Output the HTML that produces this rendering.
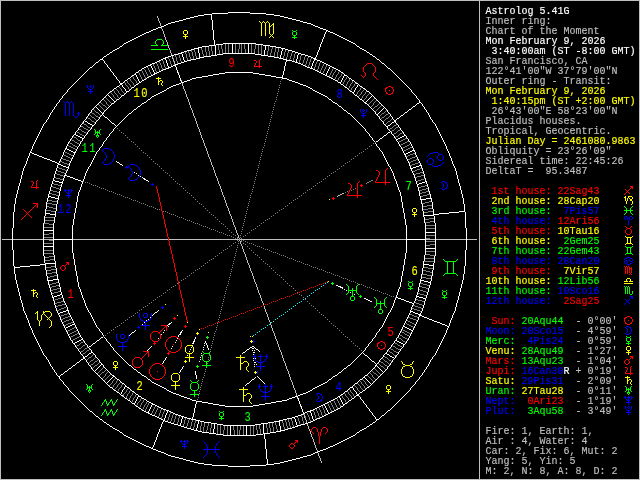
<!DOCTYPE html>
<html lang="en"><head><meta charset="utf-8"><title>Astrolog 5.41G</title>
<style>
html,body{margin:0;padding:0;background:#000;}
body{width:640px;height:480px;overflow:hidden;position:relative;}
svg{position:absolute;left:0;top:0;display:block;will-change:transform;}
.t{font-family:"Liberation Mono","DejaVu Sans Mono",monospace;font-size:10px;white-space:pre;stroke-width:.16px;}
.h{font-family:"Liberation Mono","DejaVu Sans Mono",monospace;font-size:13px;text-anchor:middle;stroke-width:.12px;}
</style></head><body>
<svg width="640" height="480" viewBox="0 0 640 480">
<rect width="640" height="480" fill="#000"/>
<g shape-rendering="crispEdges" fill="none" stroke-width="1">
<path stroke="#ffffff" transform="translate(0,.5)" d="M228 12h22M212 13h16M250 13h16M204 14h8M266 14h8M198 15h6M274 15h6M194 16h4M280 16h4M190 17h4M284 17h4M186 18h4M288 18h4M183 19h3M292 19h4M179 20h4M296 20h4M175 21h4M300 21h3M171 22h4M303 22h4M168 23h3M307 23h4M166 24h2M311 24h2M164 25h2M313 25h2M161 26h3M315 26h3M158 27h3M318 27h2M156 28h2M320 28h3M153 29h3M323 29h3M151 30h2M326 30h2M149 31h2M328 31h2M146 32h3M330 32h3M144 33h2M333 33h2M142 34h2M335 34h2M140 35h2M337 35h2M138 36h2M339 36h2M136 37h2M341 37h2M134 38h2M343 38h2M132 39h2M345 39h2M130 40h2M347 40h2M128 41h2M349 41h2M126 42h2M351 42h2M124 43h2M223 43h33M353 43h2M216 44h7M256 44h7M209 45h7M263 45h7M120 46h2M202 46h7M270 46h6M357 46h2M198 47h4M276 47h5M117 48h2M194 48h5M281 48h4M360 48h2M115 49h2M191 49h3M285 49h3M362 49h2M113 50h2M187 50h4M288 50h4M364 50h2M184 51h3M292 51h3M110 52h2M181 52h3M295 52h3M367 52h2M178 53h4M223 53h32M298 53h3M107 54h2M174 54h4M217 54h6M255 54h6M301 54h4M370 54h2M171 55h3M211 55h6M261 55h7M305 55h3M104 56h2M168 56h3M204 56h7M268 56h6M308 56h3M373 56h2M165 57h3M199 57h5M274 57h5M311 57h2M163 58h3M196 58h4M279 58h4M313 58h3M100 59h3M161 59h2M191 59h5M283 59h4M314 59h3M377 59h2M159 60h2M187 60h4M286 60h6M317 60h3M157 61h2M184 61h3M292 61h3M320 61h2M96 62h2M155 62h2M181 62h3M295 62h3M322 62h2M152 63h3M178 63h3M298 63h3M324 63h2M382 63h2M150 64h2M175 64h3M301 64h2M326 64h2M148 65h3M173 65h3M303 65h2M328 65h2M146 66h2M171 66h2M305 66h2M330 66h2M90 67h2M144 67h2M168 67h3M307 67h3M332 67h2M142 68h2M166 68h3M310 68h3M334 68h2M388 68h2M163 69h3M313 69h2M336 69h2M139 70h2M161 70h2M315 70h2M338 70h2M159 71h2M317 71h2M136 72h2M157 72h2M225 72h28M319 72h2M341 72h2M154 73h3M219 73h6M253 73h6M321 73h2M134 74h2M153 74h2M213 74h6M259 74h6M323 74h2M132 75h2M151 75h2M208 75h5M265 75h6M325 75h2M344 75h3M149 76h2M202 76h6M271 76h5M327 76h2M147 77h2M196 77h6M276 77h7M329 77h2M128 78h2M192 78h4M282 78h5M331 78h2M349 78h2M144 79h2M190 79h2M287 79h2M333 79h2M125 80h2M142 80h2M187 80h3M289 80h3M335 80h2M352 80h2M184 81h3M292 81h3M139 82h2M181 82h3M295 82h3M338 82h3M120 83h3M179 83h2M298 83h2M356 83h2M120 84h2M136 84h2M176 84h3M300 84h3M341 84h2M173 85h3M303 85h3M117 86h2M171 86h2M306 86h2M360 86h2M132 87h2M169 87h2M308 87h2M345 87h2M114 88h2M167 88h2M310 88h2M363 88h2M164 90h2M313 90h2M110 91h2M126 91h3M162 91h2M315 91h2M350 91h2M367 91h2M160 92h2M317 92h2M352 92h2M158 93h2M319 93h2M156 94h2M321 94h2M122 95h2M154 95h2M323 95h2M355 95h2M152 96h2M325 96h2M117 99h2M148 99h2M329 99h2M360 99h2M114 101h2M144 102h2M333 102h2M364 102h2M419 102h2M112 103h2M142 103h2M335 103h2M365 103h2M417 103h2M138 106h2M339 106h2M413 106h2M134 109h2M409 109h2M344 110h2M405 112h2M102 113h2M129 113h2M348 113h2M376 114h2M401 115h2M105 117h2M397 118h2M394 120h2M85 121h2M394 121h2M392 122h2M88 123h2M112 123h2M90 124h2M92 125h2M388 125h2M386 126h2M388 132h2M74 134h2M76 135h2M384 135h2M404 135h2M78 136h2M402 136h2M80 137h2M400 137h2M82 138h2M380 138h2M398 138h2M396 139h2M376 141h2M65 148h2M67 149h2M69 150h2M412 150h3M71 151h2M410 151h2M30 152h2M73 152h3M408 152h2M32 153h2M406 153h2M34 154h3M404 154h2M37 155h2M39 156h3M42 157h2M44 158h3M47 159h3M50 160h2M52 161h3M55 162h2M117 162h2M57 163h2M58 164h3M120 164h2M61 165h2M419 165h3M63 166h3M416 166h3M66 167h3M413 167h3M410 168h3M64 175h3M67 176h3M70 177h3M73 178h2M143 178h2M75 179h3M144 179h2M53 180h2M78 180h3M146 180h2M55 181h4M81 181h2M425 181h2M59 182h4M422 182h3M419 183h3M417 184h2M48 196h3M51 197h4M55 198h4M426 198h6M420 199h6M459 211h6M449 212h10M45 213h5M439 213h10M50 214h6M433 214h6M423 215h11M43 230h11M425 232h11M53 239h20M406 239h20M43 246h11M425 248h11M45 263h11M40 264h6M423 264h6M30 265h10M429 265h5M20 266h10M14 267h6M53 279h6M47 280h6M420 280h4M424 281h4M428 282h3M336 285h2M338 286h3M340 287h3M60 294h2M57 295h3M54 296h3M416 296h3M52 297h2M396 297h2M419 297h4M364 298h2M398 298h3M423 298h3M366 299h2M401 299h3M368 300h2M404 300h2M370 301h2M406 301h3M409 302h3M412 303h2M66 310h3M63 311h3M410 311h3M60 312h3M155 312h2M413 312h2M58 313h2M415 313h3M418 314h3M419 315h3M422 316h2M424 317h3M427 318h2M429 319h3M432 320h2M434 321h3M437 322h3M169 323h2M440 323h2M72 324h3M168 324h2M442 324h3M70 325h2M445 325h2M68 326h2M403 326h2M447 326h2M66 327h2M405 327h2M407 328h2M409 329h2M411 330h2M132 332h2M180 332h2M179 334h2M101 337h2M81 339h2M79 340h2M97 340h2M395 340h2M77 341h2M193 341h2M397 341h2M75 342h2M399 342h2M73 343h2M93 343h2M192 343h2M401 343h2M403 344h2M89 346h2M252 346h2M250 347h2M252 348h2M247 349h2M256 349h2M91 352h2M243 352h2M253 352h2M89 353h2M385 353h2M387 354h2M365 355h2M85 356h2M390 356h2M83 357h2M392 357h2M83 358h2M81 359h2M372 361h2M77 362h2M254 362h2M101 364h2M73 365h2M129 365h2M348 365h2M375 365h2M69 368h2M344 368h2M134 369h2M65 371h2M138 372h2M339 372h2M61 374h2M112 375h2M142 375h2M335 375h2M365 375h2M58 376h2M113 376h2M144 376h2M333 376h2M363 377h2M117 379h2M148 379h2M252 379h2M329 379h2M360 379h2M152 382h2M325 382h2M122 383h2M154 383h2M247 383h2M323 383h2M355 383h2M156 384h2M321 384h2M158 385h2M319 385h2M125 386h2M160 386h2M317 386h2M110 387h2M127 387h2M162 387h2M315 387h2M350 387h3M367 387h2M164 388h2M313 388h2M114 390h2M167 390h2M310 390h2M363 390h2M132 391h2M169 391h2M308 391h2M345 391h2M117 392h2M171 392h2M306 392h2M360 392h2M173 393h3M303 393h3M136 394h2M176 394h3M300 394h3M341 394h2M357 394h2M121 395h2M179 395h2M298 395h2M356 395h3M138 396h3M181 396h3M295 396h3M338 396h2M184 397h3M292 397h3M125 398h2M142 398h2M187 398h3M289 398h3M335 398h2M352 398h2M144 399h2M190 399h2M287 399h2M333 399h2M128 400h2M192 400h4M282 400h5M331 400h2M349 400h2M147 401h2M196 401h6M276 401h6M329 401h2M149 402h2M202 402h6M271 402h5M327 402h2M132 403h3M151 403h2M208 403h5M265 403h6M325 403h2M345 403h2M152 404h3M213 404h6M259 404h6M323 404h2M343 404h2M155 405h2M219 405h6M253 405h6M321 405h2M136 406h2M157 406h2M225 406h28M319 406h2M341 406h2M159 407h2M317 407h2M139 408h2M161 408h2M315 408h2M338 408h2M163 409h3M313 409h2M336 409h2M142 410h2M166 410h3M310 410h3M334 410h2M388 410h2M90 411h2M144 411h2M169 411h2M307 411h4M332 411h2M146 412h3M171 412h2M305 412h2M330 412h2M148 413h2M173 413h2M303 413h2M328 413h2M150 414h2M175 414h3M301 414h2M326 414h2M152 415h3M178 415h3M298 415h3M324 415h2M382 415h2M96 416h2M155 416h2M181 416h3M295 416h3M322 416h2M157 417h2M184 417h3M292 417h3M320 417h2M159 418h2M187 418h4M287 418h5M317 418h3M100 419h2M161 419h2M191 419h5M283 419h4M315 419h2M376 419h3M163 420h2M196 420h4M279 420h4M313 420h2M165 421h3M200 421h4M274 421h6M311 421h2M104 422h2M168 422h3M204 422h7M268 422h6M308 422h3M373 422h2M171 423h3M211 423h6M261 423h7M305 423h3M107 424h2M174 424h4M217 424h6M255 424h6M301 424h4M370 424h2M178 425h3M223 425h32M297 425h4M110 426h2M181 426h3M295 426h3M367 426h2M184 427h3M292 427h3M113 428h2M187 428h4M288 428h4M364 428h2M115 429h2M191 429h3M285 429h3M362 429h2M117 430h2M194 430h4M280 430h5M360 430h2M198 431h4M276 431h5M120 432h2M202 432h7M270 432h6M357 432h2M209 433h7M263 433h7M216 434h7M256 434h7M124 435h2M223 435h33M353 435h2M126 436h2M351 436h2M128 437h2M349 437h2M130 438h2M347 438h2M132 439h2M345 439h2M134 440h2M343 440h2M136 441h2M341 441h2M138 442h2M339 442h2M140 443h2M337 443h2M142 444h2M335 444h2M144 445h2M333 445h2M146 446h3M330 446h3M149 447h2M328 447h2M151 448h2M326 448h2M153 449h3M323 449h3M156 450h2M320 450h3M158 451h3M318 451h2M161 452h3M315 452h3M164 453h2M313 453h2M166 454h2M311 454h2M168 455h3M307 455h4M171 456h4M303 456h4M175 457h4M300 457h3M179 458h4M296 458h4M183 459h3M292 459h4M186 460h4M288 460h4M190 461h4M284 461h4M194 462h4M280 462h4M198 463h6M274 463h6M204 464h8M266 464h8M212 465h16M250 465h16M228 466h22"/>
<path stroke="#ffffff" transform="translate(.5,0)" d="M12 228v22M13 212v16M13 250v16M14 204v8M14 266v1M14 268v6M15 198v6M15 274v6M16 194v4M16 280v4M17 190v4M17 284v4M18 186v4M18 288v4M19 183v3M19 292v4M20 179v4M20 296v4M21 175v4M21 300v3M22 171v4M22 303v4M23 168v3M23 307v4M24 166v2M24 311v2M25 164v2M25 313v2M26 161v3M26 315v3M27 158v3M27 318v2M28 156v2M28 320v3M29 153v3M29 323v3M30 151v1M30 326v2M31 149v2M31 328v2M32 146v3M32 330v3M33 144v2M33 333v2M34 142v2M34 335v2M35 140v2M35 337v2M36 138v2M36 339v2M37 136v2M37 341v2M38 134v2M38 343v2M39 132v2M39 345v2M40 130v2M40 347v2M41 128v2M41 349v2M42 126v2M42 351v2M43 124v2M43 223v7M43 231v15M43 247v9M43 353v2M44 123v1M44 216v7M44 256v7M44 355v1M45 122v1M45 209v4M45 214v2M45 265v5M45 356v1M46 120v2M46 202v7M46 270v6M46 357v2M47 119v1M47 198v4M47 276v4M47 359v1M48 117v2M48 194v2M48 197v1M48 281v4M48 360v2M49 115v2M49 191v3M49 285v3M49 362v2M50 113v2M50 187v4M50 288v4M50 364v2M51 112v1M51 184v3M51 292v3M51 366v1M52 110v2M52 181v3M52 295v2M52 367v2M53 109v1M53 178v2M53 223v7M53 231v8M53 240v6M53 247v8M53 298v3M53 369v1M54 107v2M54 174v4M54 217v6M54 255v6M54 301v4M54 370v2M55 106v1M55 171v3M55 211v3M55 215v2M55 261v2M55 264v4M55 305v3M55 372v1M56 104v2M56 168v3M56 204v7M56 268v6M56 308v3M56 373v2M57 103v1M57 165v3M57 200v4M57 274v5M57 311v2M57 375v1M58 102v1M58 196v2M58 199v1M58 280v3M58 314v1M59 100v2M59 161v2M59 191v5M59 283v4M59 315v2M59 377v2M60 99v1M60 159v2M60 187v4M60 287v5M60 317v3M60 375v1M60 379v1M61 98v1M61 157v2M61 184v3M61 292v2M61 320v2M61 380v1M62 96v2M62 155v2M62 181v1M62 183v1M62 295v3M62 322v2M62 381v1M63 95v1M63 152v3M63 178v3M63 298v3M63 324v2M63 373v1M63 382v2M64 94v1M64 150v2M64 176v2M64 301v2M64 326v2M64 372v1M64 384v1M65 93v1M65 149v1M65 173v2M65 303v2M65 328v2M65 385v1M66 92v1M66 146v2M66 171v2M66 305v2M66 330v2M66 386v1M67 90v2M67 144v2M67 169v2M67 307v3M67 332v2M67 370v1M67 387v1M68 89v1M68 142v2M68 166v1M68 168v1M68 311v2M68 334v2M68 369v1M68 388v2M69 88v1M69 141v1M69 163v3M69 313v2M69 336v2M69 390v1M70 87v1M70 139v2M70 161v2M70 315v2M70 338v2M70 391v1M71 86v1M71 138v1M71 159v2M71 317v2M71 340v1M71 367v1M71 392v1M72 85v1M72 136v2M72 157v2M72 225v14M72 240v13M72 319v2M72 341v2M72 366v1M72 393v1M73 84v1M73 135v1M73 155v2M73 219v6M73 253v6M73 321v2M73 394v1M74 83v1M74 153v2M74 213v6M74 259v6M74 323v1M74 344v1M74 395v1M75 82v1M75 132v2M75 151v1M75 208v5M75 265v6M75 325v2M75 345v2M75 364v1M75 396v1M76 81v1M76 131v1M76 149v2M76 202v6M76 271v5M76 327v2M76 347v1M76 363v1M76 397v1M77 80v1M77 130v1M77 147v2M77 196v6M77 276v6M77 329v2M77 348v1M77 398v1M78 79v1M78 128v2M78 146v1M78 192v4M78 282v5M78 331v2M78 349v2M78 399v1M79 78v1M79 127v1M79 144v2M79 190v2M79 287v2M79 333v2M79 351v1M79 361v1M79 400v1M80 77v1M80 125v2M80 142v2M80 187v3M80 289v3M80 335v2M80 352v2M80 360v1M80 401v1M81 76v1M81 124v1M81 141v1M81 184v3M81 292v3M81 337v1M81 354v1M81 402v1M82 75v1M82 123v1M82 139v2M82 182v2M82 295v3M82 338v1M82 355v1M82 403v1M83 74v1M83 121v2M83 179v2M83 298v2M83 340v1M83 356v1M83 404v1M84 73v1M84 120v1M84 136v2M84 176v3M84 300v3M84 341v2M84 405v1M85 72v1M85 119v1M85 135v1M85 173v3M85 303v3M85 343v1M85 359v1M85 406v1M86 71v1M86 117v2M86 134v1M86 171v2M86 306v2M86 344v1M86 360v2M86 407v1M87 70v1M87 116v1M87 122v1M87 132v2M87 169v2M87 308v2M87 345v2M87 355v1M87 362v1M87 408v1M88 69v1M88 114v2M88 131v1M88 167v2M88 310v2M88 347v1M88 354v1M88 363v2M88 409v1M89 68v1M89 113v1M89 130v1M89 166v1M89 312v1M89 348v1M89 365v1M89 410v1M90 112v1M90 129v1M90 164v2M90 313v2M90 349v1M90 366v1M91 110v2M91 127v2M91 162v2M91 315v2M91 345v1M91 350v2M91 367v2M92 66v1M92 109v1M92 126v1M92 160v2M92 317v2M92 344v1M92 369v1M92 412v1M93 65v1M93 108v1M93 158v2M93 319v2M93 353v1M93 370v1M93 413v1M94 64v1M94 107v1M94 124v1M94 156v2M94 321v2M94 354v1M94 371v1M94 414v1M95 63v1M95 106v1M95 122v2M95 154v2M95 323v2M95 342v1M95 355v2M95 370v1M95 372v1M95 415v1M96 105v1M96 107v1M96 121v1M96 152v2M96 325v2M96 341v1M96 357v1M96 369v1M96 373v1M97 104v1M97 108v1M97 120v1M97 151v1M97 327v1M97 358v1M97 368v1M97 374v1M98 61v1M98 103v1M98 109v1M98 119v1M98 150v1M98 328v1M98 359v1M98 367v1M98 375v1M98 417v1M99 60v1M99 102v1M99 110v1M99 117v2M99 148v2M99 329v2M99 339v1M99 360v2M99 366v1M99 376v1M99 418v1M100 101v1M100 111v1M100 116v1M100 147v1M100 331v1M100 338v1M100 362v1M100 365v1M100 377v1M101 100v1M101 112v1M101 115v1M101 146v1M101 332v1M101 363v1M101 378v1M102 58v1M102 99v1M102 114v1M102 144v2M102 333v2M102 379v1M102 420v1M103 57v1M103 60v1M103 98v1M103 112v1M103 115v1M103 142v2M103 335v1M103 365v2M103 380v1M103 421v1M104 61v2M104 97v1M104 111v1M104 116v1M104 141v1M104 337v1M104 367v1M104 381v1M105 63v1M105 96v1M105 110v1M105 140v1M105 338v1M105 368v1M105 382v1M106 55v1M106 64v1M106 95v1M106 109v1M106 138v2M106 339v2M106 369v1M106 383v1M106 423v1M107 65v2M107 94v1M107 108v1M107 118v1M107 137v1M107 341v1M107 370v1M107 382v1M107 384v1M108 67v1M108 93v1M108 95v1M108 107v1M108 119v1M108 136v1M108 342v1M108 371v1M108 381v1M108 385v1M109 53v1M109 68v1M109 92v1M109 96v1M109 106v1M109 120v1M109 134v2M109 343v1M109 372v1M109 380v1M109 386v1M109 425v1M110 69v2M110 97v1M110 105v1M110 121v1M110 133v1M110 344v2M110 373v1M110 379v1M111 71v1M111 98v1M111 104v1M111 122v1M111 132v1M111 346v1M111 374v1M111 378v1M112 51v1M112 72v1M112 90v1M112 99v1M112 131v1M112 347v1M112 377v1M112 388v1M112 427v1M113 73v2M113 89v1M113 100v1M113 129v2M113 348v2M113 389v1M114 75v1M114 102v1M114 124v1M114 128v1M114 350v1M115 76v1M115 125v1M115 127v1M115 351v1M115 377v1M116 77v2M116 87v1M116 100v1M116 126v1M116 161v1M116 352v1M116 378v1M116 391v1M117 79v1M117 125v1M117 353v1M118 80v1M118 124v1M118 354v1M119 47v1M119 81v2M119 85v1M119 98v1M119 123v1M119 163v1M119 355v1M119 380v1M119 393v1M119 431v1M120 97v1M120 122v1M120 356v1M120 381v1M120 394v1M121 96v1M121 121v1M121 357v1M121 382v1M121 392v2M122 45v1M122 85v2M122 120v1M122 165v1M122 358v1M122 390v2M122 433v1M123 44v1M123 82v1M123 87v1M123 119v1M123 359v1M123 389v1M123 396v1M123 434v1M124 81v1M124 88v1M124 94v1M124 118v1M124 360v1M124 384v1M124 387v2M124 397v1M125 89v2M125 93v1M125 117v1M125 361v1M125 385v1M126 92v1M126 116v1M126 362v1M127 79v1M127 115v1M127 363v1M127 399v1M128 114v1M128 364v1M129 90v1M129 335v1M129 388v1M130 77v1M130 89v1M130 334v1M130 389v1M130 401v1M131 76v1M131 88v1M131 112v1M131 333v1M131 366v1M131 390v1M131 402v1M132 111v1M132 367v1M133 110v1M133 368v1M134 86v1M134 172v1M134 331v1M134 392v1M134 404v1M135 73v1M135 85v1M135 330v1M135 393v1M135 401v2M135 405v1M136 75v2M136 108v1M136 173v1M136 370v1M136 399v2M137 77v2M137 107v1M137 371v1M137 397v2M138 71v1M138 79v2M138 83v1M138 175v1M138 395v1M138 407v1M139 81v1M140 105v1M140 176v1M140 373v1M141 69v1M141 81v1M141 104v1M141 374v1M141 397v1M141 409v1M142 177v1M142 324v1M144 322v1M146 78v1M146 101v1M146 320v1M146 377v1M146 400v1M147 100v1M147 350v1M147 378v1M148 181v1M148 319v1M148 349v1M148 411v1M149 348v1M149 409v2M150 98v1M150 317v1M150 347v1M150 380v1M150 407v2M151 66v2M151 97v1M151 346v1M151 381v1M151 405v2M152 68v2M152 315v1M152 447v1M153 70v2M153 314v1M153 445v2M154 72v1M154 313v1M154 442v3M155 440v2M156 437v3M157 311v1M157 434v3M158 310v1M158 338v1M158 432v2M159 429v3M160 427v2M161 334v1M161 424v3M162 363v1M162 422v2M163 332v1M163 361v2M163 421v1M164 330v1M164 360v1M164 418v2M165 59v1M165 358v2M165 415v3M166 60v3M166 89v1M166 357v1M166 389v1M166 413v2M167 63v3M167 325v1M167 411v2M168 66v1M168 326v1M171 322v1M171 348v1M172 346v1M175 66v1M175 342v1M176 67v3M176 340v1M177 70v3M177 338v1M178 73v2M178 335v2M179 75v3M179 372v1M180 78v3M180 333v1M180 370v2M180 423v2M181 81v1M181 331v1M181 369v1M181 419v4M182 54v3M182 330v1M182 367v2M182 417v2M183 57v3M183 366v1M184 60v1M187 355v1M189 351v1M190 349v1M191 347v1M192 345v1M192 417v2M193 342v1M193 413v4M194 339v2M194 408v5M195 337v2M195 371v4M195 404v4M196 375v4M196 402v2M196 428v2M197 424v4M198 49v4M198 421v3M199 53v4M199 361v1M200 357v1M200 359v1M201 353v1M201 355v1M203 347v1M203 349v1M204 343v1M204 345v1M205 341v2M206 343v2M207 345v3M208 348v2M211 15v5M212 20v10M213 30v10M213 429v4M214 40v5M214 424v5M215 46v9M230 426v9M232 44v9M242 353v1M245 351v1M245 385v1M246 350v1M246 384v1M246 426v9M248 44v9M249 348v1M249 382v1M250 381v1M251 380v1M252 350v1M253 354v1M253 358v1M253 360v1M254 347v1M254 350v1M254 364v1M254 366v1M254 378v1M255 348v1M255 358v1M255 377v1M256 364v1M257 376v1M258 350v1M258 377v1M259 351v1M259 378v1M260 379v1M261 380v1M262 381v1M263 382v1M263 424v9M264 50v5M264 383v1M264 434v5M265 46v4M265 439v10M266 449v10M267 459v5M279 422v4M280 55v3M280 426v4M281 51v4M282 49v2M282 75v2M283 71v4M284 66v5M285 62v4M286 61v1M294 418v1M295 419v3M296 59v3M296 422v3M297 55v4M297 397v1M298 54v1M298 398v3M299 401v3M300 404v2M301 406v3M302 409v3M303 412v1M310 412v1M311 66v2M311 413v3M312 63v3M312 89v1M312 389v1M312 416v3M313 61v2M313 419v1M314 60v1M315 57v1M316 55v2M317 52v3M318 50v2M319 47v3M320 44v3M321 42v2M322 39v3M323 37v2M324 34v3M324 405v1M325 32v2M325 406v2M326 31v1M326 73v2M326 408v2M327 71v2M327 97v1M327 381v1M327 410v2M328 69v2M328 98v1M328 380v1M328 412v1M329 67v2M331 100v1M331 378v1M332 101v1M332 377v1M337 81v1M337 104v1M337 374v1M337 397v1M338 105v1M338 373v1M339 397v1M340 71v1M340 83v1M340 395v1M340 398v2M340 407v1M341 80v2M341 107v1M341 371v1M341 400v2M342 78v2M342 108v1M342 288v1M342 370v1M342 402v2M343 73v1M343 76v2M343 85v1M343 109v1M343 369v1M343 393v1M343 405v1M344 74v1M344 86v1M344 289v1M344 392v1M346 111v1M346 290v1M346 367v1M347 76v1M347 88v1M347 112v1M347 366v1M347 390v1M347 402v1M348 77v1M348 89v1M348 389v1M348 401v1M349 90v1M349 388v1M350 114v1M350 292v1M350 364v1M351 79v1M351 115v1M351 363v1M351 399v1M352 116v1M352 362v1M352 386v1M353 93v1M353 117v1M353 361v1M353 385v1M353 388v2M354 81v1M354 90v2M354 94v1M354 118v1M354 294v1M354 360v1M354 384v1M354 390v1M354 397v1M355 44v1M355 82v1M355 88v2M355 119v1M355 359v1M355 391v1M355 396v1M355 434v1M356 45v1M356 87v1M356 120v1M356 358v1M356 392v2M356 433v1M357 85v2M357 96v1M357 121v1M357 357v1M357 382v1M358 84v1M358 97v1M358 122v1M358 356v1M358 381v1M359 47v1M359 85v1M359 98v1M359 123v1M359 355v1M359 380v1M359 393v1M359 396v1M359 431v1M360 124v1M360 354v1M360 397v2M361 125v1M361 353v1M361 399v1M362 87v1M362 100v1M362 126v1M362 352v1M362 378v1M362 391v1M362 400v1M363 101v1M363 127v1M363 351v1M363 353v1M363 401v2M364 128v1M364 350v1M364 354v1M364 376v1M364 403v1M365 89v1M365 129v2M365 348v2M365 378v1M365 389v1M365 404v1M366 51v1M366 90v1M366 101v1M366 131v1M366 347v1M366 379v1M366 388v1M366 405v2M366 427v1M367 100v1M367 104v1M367 132v1M367 346v1M367 356v1M367 374v1M367 380v1M367 407v1M368 99v1M368 105v1M368 133v1M368 344v2M368 357v1M368 373v1M368 381v1M368 408v1M369 53v1M369 92v1M369 98v1M369 106v1M369 134v2M369 343v1M369 358v1M369 372v1M369 382v1M369 386v1M369 409v2M369 425v1M370 93v1M370 97v1M370 107v1M370 136v1M370 342v1M370 359v1M370 371v1M370 383v1M370 385v1M370 411v1M371 94v1M371 96v1M371 108v1M371 137v1M371 341v1M371 360v1M371 370v1M371 384v1M371 412v1M372 55v1M372 95v1M372 109v1M372 138v2M372 339v2M372 369v1M372 383v1M372 413v2M372 423v1M373 96v1M373 110v1M373 140v1M373 338v1M373 368v1M373 382v1M373 415v1M374 97v1M374 111v1M374 141v1M374 337v1M374 362v1M374 367v1M374 381v1M374 416v1M375 57v1M375 98v1M375 112v2M375 143v1M375 335v2M375 363v1M375 366v1M375 380v1M375 417v2M375 421v1M376 58v1M376 99v1M376 144v2M376 333v2M376 364v1M376 379v1M376 420v1M377 100v1M377 115v1M377 146v1M377 332v1M377 363v1M377 366v1M377 378v1M378 101v1M378 113v1M378 116v1M378 140v1M378 147v1M378 331v1M378 362v1M378 367v1M378 377v1M379 60v1M379 102v1M379 112v1M379 117v2M379 139v1M379 148v2M379 329v2M379 360v2M379 368v1M379 376v1M379 418v1M380 61v1M380 103v1M380 111v1M380 119v1M380 150v1M380 328v1M380 359v1M380 369v1M380 375v1M380 417v1M381 62v1M381 104v1M381 110v1M381 120v1M381 151v1M381 327v1M381 358v1M381 370v1M381 374v1M381 416v1M382 105v1M382 109v1M382 121v1M382 137v1M382 152v2M382 325v2M382 357v1M382 371v1M382 373v1M383 106v1M383 108v1M383 122v2M383 136v1M383 154v2M383 323v2M383 355v2M383 372v1M384 64v1M384 107v1M384 124v1M384 156v2M384 321v2M384 354v1M384 371v1M384 414v1M385 65v1M385 108v1M385 125v1M385 158v2M385 319v2M385 370v1M385 413v1M386 66v1M386 109v1M386 134v1M386 160v2M386 317v2M386 352v1M386 369v1M386 412v1M387 67v1M387 110v2M387 127v2M387 133v1M387 162v2M387 315v2M387 350v2M387 367v2M387 411v1M388 112v1M388 129v1M388 164v2M388 313v2M388 349v1M388 366v1M389 113v1M389 130v1M389 166v1M389 312v1M389 348v1M389 355v1M389 365v1M390 69v1M390 114v2M390 124v1M390 131v1M390 167v2M390 310v2M390 347v1M390 363v2M390 409v1M391 70v1M391 116v1M391 123v1M391 132v2M391 169v2M391 308v2M391 345v2M391 362v1M391 408v1M392 71v1M392 117v2M392 134v1M392 171v2M392 306v2M392 344v1M392 360v2M392 407v1M393 72v1M393 119v1M393 135v1M393 173v3M393 303v3M393 343v1M393 359v1M393 406v1M394 73v1M394 136v2M394 176v3M394 300v3M394 341v2M394 358v1M394 405v1M395 74v1M395 122v1M395 138v1M395 179v2M395 298v2M395 356v2M395 404v1M396 75v1M396 119v1M396 123v1M396 140v1M396 181v3M396 295v2M396 338v2M396 355v1M396 403v1M397 76v1M397 124v1M397 141v1M397 184v3M397 292v3M397 337v1M397 354v1M397 402v1M398 77v1M398 125v2M398 142v2M398 187v3M398 289v3M398 335v2M398 352v2M398 401v1M399 78v1M399 117v1M399 127v1M399 144v2M399 190v2M399 287v2M399 333v2M399 351v1M399 400v1M400 79v1M400 116v1M400 128v2M400 146v1M400 192v4M400 282v5M400 331v2M400 349v2M400 399v1M401 80v1M401 130v1M401 147v2M401 196v6M401 276v6M401 329v2M401 348v1M401 398v1M402 81v1M402 131v1M402 149v2M402 202v6M402 271v5M402 327v2M402 347v1M402 397v1M403 82v1M403 114v1M403 132v2M403 151v2M403 208v5M403 265v6M403 325v1M403 345v2M403 396v1M404 83v1M404 113v1M404 134v1M404 153v1M404 213v6M404 259v6M404 323v2M404 395v1M405 84v1M405 155v2M405 219v6M405 253v6M405 321v2M405 343v1M405 394v1M406 85v1M406 136v2M406 157v2M406 225v14M406 240v13M406 319v2M406 341v2M406 393v1M407 86v1M407 111v1M407 138v1M407 159v2M407 317v2M407 340v1M407 392v1M408 87v1M408 110v1M408 139v2M408 161v2M408 315v2M408 338v2M408 391v1M409 88v1M409 141v1M409 163v3M409 313v2M409 336v2M409 390v1M410 89v1M410 142v2M410 166v2M410 310v1M410 312v1M410 334v2M410 388v2M411 90v2M411 108v1M411 144v2M411 169v2M411 307v3M411 332v2M411 387v1M412 92v1M412 107v1M412 146v2M412 171v2M412 305v2M412 331v1M412 386v1M413 93v1M413 148v2M413 173v2M413 304v1M413 328v2M413 385v1M414 94v1M414 151v1M414 175v3M414 301v2M414 326v2M414 384v1M415 95v1M415 105v1M415 152v3M415 178v3M415 298v3M415 324v2M415 382v2M416 96v2M416 104v1M416 155v2M416 181v3M416 295v1M416 297v1M416 322v2M416 381v1M417 98v1M417 157v2M417 185v2M417 292v3M417 320v2M417 380v1M418 99v1M418 159v2M418 187v4M418 287v5M418 317v3M418 379v1M419 100v2M419 161v2M419 191v5M419 283v4M419 316v1M419 377v2M420 163v2M420 196v3M420 279v1M420 281v2M420 313v1M420 376v1M421 103v1M421 166v2M421 200v4M421 274v5M421 311v2M421 375v1M422 104v2M422 168v3M422 204v7M422 268v6M422 308v3M422 373v2M423 106v1M423 171v3M423 211v4M423 216v1M423 261v3M423 265v3M423 305v3M423 372v1M424 107v2M424 174v4M424 217v6M424 255v6M424 301v4M424 370v2M425 109v1M425 178v3M425 223v9M425 233v6M425 240v8M425 249v6M425 299v2M425 369v1M426 110v2M426 182v2M426 295v3M426 367v2M427 112v1M427 184v3M427 292v3M427 366v1M428 113v2M428 187v4M428 288v4M428 364v2M429 115v2M429 191v3M429 285v3M429 362v2M430 117v2M430 194v4M430 281v1M430 283v2M430 360v2M431 119v1M431 199v3M431 276v5M431 359v1M432 120v2M432 202v7M432 270v6M432 357v2M433 122v1M433 209v5M433 263v2M433 266v4M433 356v1M434 123v1M434 216v7M434 256v7M434 355v1M435 124v2M435 223v9M435 233v15M435 249v7M435 353v2M436 126v2M436 351v2M437 128v2M437 349v2M438 130v2M438 347v2M439 132v2M439 345v2M440 134v2M440 343v2M441 136v2M441 341v2M442 138v2M442 339v2M443 140v2M443 337v2M444 142v2M444 335v2M445 144v2M445 333v2M446 146v3M446 330v3M447 149v2M447 328v2M448 151v2M448 327v1M449 153v3M449 323v3M450 156v2M450 320v3M451 158v3M451 318v2M452 161v3M452 315v3M453 164v2M453 313v2M454 166v2M454 311v2M455 168v3M455 307v4M456 171v4M456 303v4M457 175v4M457 300v3M458 179v4M458 296v4M459 183v3M459 292v4M460 186v4M460 288v4M461 190v4M461 284v4M462 194v4M462 280v4M463 198v6M463 274v6M464 204v7M464 266v8M465 212v16M465 250v16M466 228v22"/>
<path stroke="#bfbfbf" transform="translate(0,.5)" d="M0 0h640M342 193h2M340 194h2M338 195h2M2 239h10M13 239h30M44 239h9M73 239h95M169 239h70M240 239h166M426 239h9M436 239h30M467 239h10M0 479h640"/>
<path stroke="#bfbfbf" transform="translate(.5,0)" d="M0 1v478M157 16v2M158 18v3M159 21v2M160 23v3M161 27v2M162 29v2M163 31v3M164 34v3M165 37v3M166 40v2M167 42v3M168 45v3M169 48v2M170 50v3M171 53v2M172 56v3M173 59v2M174 61v3M178 72v1M181 80v1M182 83v3M183 86v3M184 89v2M185 91v3M186 94v3M187 97v2M188 99v3M189 102v3M190 105v3M191 108v2M192 110v3M193 113v3M194 116v2M195 118v3M196 121v3M197 124v3M198 127v2M199 129v3M200 132v3M201 135v3M202 138v2M203 140v3M204 143v3M205 146v2M206 148v3M207 151v3M208 154v3M209 157v2M210 159v3M211 162v3M212 165v2M213 167v3M214 170v3M215 173v3M216 176v2M217 178v3M218 181v3M219 184v2M220 186v3M221 189v3M222 192v3M223 195v2M224 197v3M225 200v3M226 203v3M227 206v2M228 208v3M229 211v3M230 214v2M231 216v3M232 219v3M233 222v3M234 225v2M235 227v3M236 230v3M237 233v2M238 235v3M239 238v1M239 240v1M240 241v3M241 244v2M242 246v3M243 249v3M244 252v2M245 254v3M246 257v3M247 260v3M248 263v2M249 265v3M250 268v3M251 271v2M252 273v3M253 276v3M254 279v3M255 282v2M256 284v3M257 287v3M258 290v3M259 293v2M260 295v3M261 298v3M262 301v2M263 303v2M264 306v3M265 309v3M266 312v2M267 314v3M268 317v3M269 320v2M270 322v3M271 325v3M272 328v3M273 331v2M274 333v3M275 336v3M276 339v2M277 341v3M278 344v3M279 347v3M280 350v2M281 352v3M282 355v3M283 358v3M284 361v2M285 363v3M286 366v3M287 369v2M288 371v3M289 374v3M290 377v3M291 380v2M292 382v3M293 385v3M294 388v2M295 390v3M296 393v3M297 398v1M300 406v1M303 414v1M304 415v3M305 418v2M306 420v3M307 424v2M308 426v3M309 429v2M310 431v3M311 434v3M312 437v2M313 439v3M314 442v3M315 445v3M316 448v2M317 450v2M318 453v3M319 456v2M320 458v3M321 461v2M337 196v1M479 1v478M639 1v478"/>
<path stroke="#7f7f7f" transform="translate(0,.5)" d="M103 105h2M375 106h2M96 112h2M92 113h2M382 113h2M386 114h2M96 116h2M92 117h2M382 117h2M88 118h2M386 118h2M92 121h2M388 121h2M84 124h2M394 125h2M81 126h2M88 127h2M396 127h2M84 128h2M390 128h2M79 129h2M86 129h2M392 130h2M398 130h2M82 131h2M77 132h2M84 132h2M394 133h2M400 133h2M80 134h2M82 135h2M396 136h2M74 137h2M405 138h2M403 139h2M72 140h2M78 140h2M401 140h2M399 141h2M407 141h2M75 142h2M405 142h2M70 143h2M77 143h2M403 143h2M401 144h2M73 145h2M407 145h2M69 146h2M75 146h2M405 146h2M71 147h2M403 147h2M410 147h2M73 148h2M408 148h2M406 149h2M404 150h2M65 152h2M67 153h2M413 153h2M69 154h2M410 154h3M64 155h2M71 155h2M408 155h2M66 156h2M406 156h2M68 157h2M412 157h3M70 158h2M410 158h2M63 159h3M408 159h2M416 159h2M66 160h3M413 160h3M60 161h2M411 161h2M62 162h2M409 162h2M64 163h3M415 163h3M67 164h2M412 164h3M410 165h2M59 168h3M420 168h2M62 169h3M417 169h3M65 170h2M415 170h2M58 171h3M413 171h2M61 172h3M420 172h3M416 173h4M57 174h3M414 174h2M60 175h3M421 175h3M417 176h4M415 177h2M56 178h4M60 179h3M421 179h3M371 180h2M418 180h3M369 181h2M367 182h2M54 184h4M58 185h3M425 185h2M421 186h4M53 187h3M419 187h2M56 188h3M426 188h2M422 189h4M51 190h2M419 190h3M53 191h4M426 191h3M57 192h2M422 192h4M50 193h2M420 193h2M52 194h4M427 194h3M56 195h3M423 195h4M421 196h2M48 200h4M52 201h5M429 201h2M425 202h4M47 203h5M422 203h3M52 204h4M427 205h5M47 206h2M423 206h4M49 207h4M53 208h3M428 208h4M423 209h5M46 210h5M51 211h4M428 211h5M424 212h4M45 217h9M429 218h5M425 219h4M45 220h9M430 221h4M425 222h5M44 223h5M49 224h4M426 225h9M44 227h9M426 228h9M49 233h4M44 234h5M426 235h9M44 237h9M426 238h4M49 240h4M426 241h9M44 243h9M430 244h5M426 245h4M44 250h9M426 251h9M44 253h9M426 254h4M430 255h5M49 256h5M45 257h4M425 258h9M50 259h4M45 260h5M424 261h10M51 266h4M46 267h5M424 267h4M428 268h5M51 269h5M47 270h4M423 270h3M426 271h4M52 272h4M430 272h2M47 273h5M422 274h5M54 275h3M427 275h5M50 276h4M48 277h2M422 277h4M426 278h5M56 282h2M52 283h4M420 283h3M49 284h3M423 284h4M56 285h3M427 285h2M52 286h4M420 286h2M50 287h2M422 287h4M57 288h3M426 288h2M53 289h4M51 290h2M420 290h3M58 291h2M423 291h3M54 292h4M52 293h2M418 293h2M420 294h4M424 295h2M58 298h3M55 299h3M416 299h2M418 300h4M61 301h3M422 301h2M57 302h4M55 303h2M416 303h3M62 304h3M419 304h3M58 305h4M413 305h2M56 306h2M415 306h3M64 307h2M418 307h3M61 308h3M412 308h2M59 309h2M414 309h3M57 310h2M417 310h3M67 313h2M64 314h3M410 314h2M61 315h3M412 315h2M68 316h2M414 316h3M65 317h3M408 317h2M63 318h2M410 318h3M61 319h2M69 319h2M413 319h3M66 320h3M64 321h2M408 321h2M71 322h2M410 322h2M68 323h3M412 323h2M66 324h2M407 324h2M64 325h2M409 325h2M411 326h2M74 327h2M72 328h2M70 329h2M68 330h2M403 330h2M74 331h2M405 331h2M72 332h2M402 332h2M407 332h2M70 333h2M77 333h2M409 333h2M75 334h2M405 334h2M73 335h2M400 335h2M407 335h2M71 336h2M77 337h2M403 337h2M75 338h2M399 338h2M405 338h2M73 339h2M403 341h2M81 342h2M395 343h2M77 345h2M83 345h2M398 345h2M393 346h2M400 346h2M79 348h2M85 348h2M396 348h2M391 349h2M398 349h2M87 350h2M81 351h2M394 351h2M390 352h2M396 352h2M83 353h2M394 355h2M89 357h2M385 357h2M91 360h2M389 360h2M95 361h2M385 361h2M381 362h2M91 364h2M95 365h2M385 365h2M381 366h2M102 372h2M374 373h2"/>
<path stroke="#7f7f7f" transform="translate(.5,0)" d="M52 186v1M53 183v1M54 300v1M55 177v1M56 173v1M57 170v1M58 167v1M59 189v1M60 316v1M61 297v1M62 158v1M63 176v1M63 322v1M64 173v1M67 331v1M68 145v1M69 142v1M69 161v1M69 334v1M70 337v1M71 139v1M72 144v1M72 340v1M73 136v1M74 141v1M75 149v1M76 138v1M76 330v1M76 346v1M77 139v1M79 133v1M79 336v1M79 344v1M80 141v1M80 343v1M81 130v1M81 347v1M82 122v1M82 346v1M82 354v1M83 123v1M83 127v1M83 181v1M83 341v1M83 350v1M84 349v1M85 182v1M85 344v1M85 352v1M86 125v1M86 133v1M86 351v1M87 117v1M87 126v1M87 182v1M87 347v1M87 359v1M88 130v1M88 358v1M89 114v1M89 183v1M89 349v1M89 362v1M90 115v1M90 119v1M90 128v1M90 361v1M90 365v1M91 112v1M91 116v1M91 120v1M91 184v1M91 356v1M92 355v1M92 368v1M93 109v1M93 185v1M93 354v1M93 359v1M93 363v1M93 367v1M94 110v1M94 114v1M94 118v1M94 122v1M94 358v1M94 362v1M94 366v1M95 111v1M95 115v1M95 119v1M95 185v1M95 357v1M96 120v1M97 186v1M97 360v1M97 364v1M97 373v1M98 104v1M98 113v1M98 117v1M98 363v1M98 372v1M99 105v1M99 114v1M99 187v1M99 362v1M99 371v1M99 375v1M100 102v1M100 106v1M100 115v1M100 370v1M100 374v1M101 103v1M101 107v1M101 188v1M101 369v1M101 373v1M102 104v1M102 108v1M102 368v1M102 378v1M103 99v1M103 109v1M103 188v1M103 336v1M103 367v1M103 377v1M104 100v1M104 110v1M104 371v1M104 376v1M104 380v1M105 97v1M105 101v1M105 106v1M105 189v1M105 335v1M105 370v1M105 374v2M105 379v1M106 98v1M106 102v2M106 107v1M106 373v1M106 378v1M107 99v1M107 104v1M107 190v1M107 333v1M107 372v1M107 377v1M108 100v1M108 105v1M108 376v1M109 101v1M109 191v1M109 332v1M109 375v1M109 385v1M110 92v1M110 102v1M110 374v1M110 384v1M111 93v1M111 103v1M111 191v1M111 330v1M111 383v1M112 94v1M112 381v2M112 387v1M113 90v1M113 95v2M113 192v1M113 329v1M113 380v1M113 385v2M114 91v2M114 97v1M114 379v1M114 384v1M114 389v1M115 93v1M115 98v1M115 193v1M115 327v1M115 378v1M115 383v1M115 388v1M116 89v1M116 94v1M116 99v1M116 381v2M116 387v1M117 90v1M117 95v2M117 128v1M117 194v1M117 326v1M117 380v1M117 385v2M117 391v1M118 91v2M118 97v1M118 384v1M118 389v2M119 87v1M119 93v1M119 130v1M119 194v1M119 325v1M119 383v1M119 388v1M120 88v1M120 94v1M120 382v1M120 387v1M121 89v2M121 95v1M121 132v1M121 195v1M121 323v1M121 385v2M122 91v1M122 384v1M122 396v1M123 92v1M123 133v1M123 196v1M123 322v1M123 394v2M124 82v1M124 93v1M124 393v1M125 83v2M125 135v1M125 197v1M125 320v1M125 392v1M126 85v1M126 390v2M126 396v2M127 81v2M127 86v1M127 137v1M127 197v1M127 319v1M127 389v1M127 394v2M128 83v1M128 87v2M128 388v1M128 393v1M129 84v1M129 89v1M129 139v1M129 198v1M129 317v1M129 391v2M129 398v2M130 79v2M130 85v2M130 390v1M130 396v2M131 81v1M131 87v1M131 141v1M131 199v1M131 316v1M131 395v1M132 76v1M132 82v1M132 393v2M132 400v2M133 77v2M133 83v2M133 142v1M133 200v1M133 315v1M133 392v1M133 398v2M134 79v1M134 85v1M134 397v1M135 80v1M135 144v1M135 200v1M135 313v1M135 395v2M136 81v2M136 405v1M137 83v1M137 146v1M137 201v1M137 312v1M137 403v2M138 72v1M138 402v1M139 73v2M139 148v1M139 202v1M139 310v1M139 401v1M139 407v1M140 75v2M140 399v2M140 405v2M141 70v1M141 77v2M141 150v1M141 203v1M141 309v1M141 398v1M141 403v2M142 71v2M142 79v1M142 402v1M142 409v1M143 73v2M143 152v1M143 203v1M143 307v1M143 400v2M143 407v2M144 69v1M144 75v2M144 405v2M145 70v2M145 77v2M145 153v1M145 204v1M145 306v1M145 404v1M145 409v2M146 72v2M146 402v2M146 407v2M147 67v1M147 74v2M147 155v1M147 205v1M147 305v1M147 405v2M148 68v2M148 76v1M148 403v2M149 70v2M149 157v1M149 206v1M149 303v1M150 72v2M151 74v1M151 159v1M151 206v1M151 302v1M151 413v1M152 411v2M153 64v2M153 161v1M153 207v1M153 300v1M153 409v2M154 66v2M154 407v2M154 414v1M155 68v3M155 163v1M155 208v1M155 299v1M155 406v1M155 412v2M156 63v1M156 71v2M156 410v2M157 64v2M157 164v1M157 209v1M157 297v1M157 408v2M158 66v3M158 407v1M158 416v1M159 61v2M159 69v2M159 166v1M159 209v1M159 296v1M159 413v3M160 63v2M160 410v3M161 65v3M161 168v1M161 295v1M161 409v1M161 417v2M162 60v1M162 68v2M162 414v3M163 61v3M163 170v1M163 211v1M163 293v1M163 412v2M164 64v3M164 410v2M165 67v2M165 172v1M165 211v1M165 292v1M167 173v1M167 212v1M167 290v1M167 420v1M168 57v2M168 417v3M169 59v2M169 175v1M169 213v1M169 289v1M169 414v3M170 61v3M170 412v2M170 421v1M171 64v2M171 177v1M171 214v1M171 287v1M171 418v3M172 415v3M173 58v1M173 61v1M173 179v1M173 214v1M173 286v1M173 414v1M173 422v1M174 64v1M174 419v3M175 55v2M175 181v1M175 215v1M175 285v1M175 416v3M176 57v4M176 415v1M177 61v3M177 183v1M177 216v1M177 283v1M177 422v2M178 54v1M178 418v4M179 55v3M179 184v1M179 217v1M179 282v1M179 416v2M180 58v3M181 61v1M181 186v1M181 217v1M181 280v1M183 188v1M183 218v1M183 279v1M183 424v2M184 420v4M185 52v2M185 190v1M185 219v1M185 278v1M185 418v2M186 54v4M186 426v1M187 58v2M187 192v1M187 220v1M187 276v1M187 423v3M188 51v2M188 420v3M189 53v4M189 193v1M189 220v1M189 275v1M189 419v1M190 57v3M190 426v2M191 50v2M191 195v1M191 221v1M191 273v1M191 422v4M192 52v4M192 420v2M193 56v3M193 197v1M193 222v1M193 272v1M193 427v2M194 49v3M194 423v4M195 52v4M195 199v1M195 223v1M195 270v1M195 420v3M196 56v2M197 201v1M197 223v1M197 269v1M197 399v1M198 395v1M198 397v1M199 203v1M199 224v1M199 268v1M199 391v1M199 393v1M200 387v1M200 389v1M200 426v5M201 48v2M201 204v1M201 225v1M201 266v1M201 383v1M201 385v1M201 422v4M202 50v4M202 379v1M202 381v1M203 54v3M203 206v1M203 226v1M203 265v1M203 377v1M203 427v5M204 373v1M204 375v1M204 423v4M205 47v5M205 208v1M205 226v1M205 263v1M205 369v1M205 371v1M206 52v4M206 430v2M207 210v1M207 227v1M207 262v1M207 363v1M207 426v4M208 47v4M208 357v1M208 359v1M208 423v3M209 51v5M209 212v1M209 228v1M209 260v1M209 353v1M209 355v1M210 349v1M210 428v5M211 46v5M211 214v1M211 229v1M211 259v1M211 345v1M211 347v1M211 424v4M212 51v4M212 341v1M212 343v1M213 215v1M213 229v1M213 258v1M213 337v1M213 339v1M214 333v1M214 335v1M215 217v1M215 230v1M215 256v1M215 331v1M216 327v1M216 329v1M217 219v1M217 231v1M217 255v1M217 323v1M217 325v1M217 425v9M218 45v5M218 319v1M218 321v1M219 50v4M219 221v1M219 232v1M219 253v1M219 315v1M219 317v1M220 311v1M220 313v1M220 425v9M221 45v4M221 223v1M221 232v1M221 252v1M221 307v1M221 309v1M222 49v5M222 303v1M222 305v1M223 224v1M223 233v1M223 250v1M223 299v1M223 301v1M223 430v5M224 295v1M224 297v1M224 426v4M225 44v9M225 226v1M225 234v1M225 249v1M225 291v1M225 293v1M226 287v1M226 289v1M227 228v1M227 235v1M227 248v1M227 285v1M227 426v9M228 44v9M228 281v1M228 283v1M229 230v1M229 235v1M229 246v1M229 277v1M229 279v1M230 273v1M230 275v1M231 232v1M231 236v1M231 245v1M231 269v1M231 271v1M232 265v1M232 267v1M233 234v1M233 237v1M233 243v1M233 261v1M233 263v1M233 426v4M234 257v1M234 259v1M234 430v5M235 44v9M235 235v1M235 238v1M235 242v1M235 253v1M235 255v1M236 249v1M236 251v1M237 237v2M237 240v1M237 245v1M237 247v1M237 426v9M238 49v4M238 241v1M238 243v1M239 44v5M239 239v1M239 430v5M240 235v1M240 237v1M240 426v4M241 44v9M241 231v1M241 233v1M241 238v1M241 240v2M242 227v1M242 229v1M243 223v1M243 225v1M243 236v1M243 240v1M243 243v1M243 426v9M244 44v5M244 219v1M244 221v1M245 49v4M245 215v1M245 217v1M245 235v1M245 241v1M245 244v1M246 211v1M246 213v1M247 207v1M247 209v1M247 233v1M247 242v1M247 246v1M248 203v1M248 205v1M249 199v1M249 201v1M249 232v1M249 243v1M249 248v1M250 195v1M250 197v1M250 426v9M251 44v9M251 193v1M251 230v1M251 243v1M251 250v1M252 189v1M252 191v1M253 185v1M253 187v1M253 229v1M253 244v1M253 252v1M253 426v9M254 49v4M254 181v1M254 183v1M255 44v5M255 177v1M255 179v1M255 228v1M255 245v1M255 254v1M256 173v1M256 175v1M256 425v5M257 169v1M257 171v1M257 226v1M257 246v1M257 255v1M257 430v4M258 45v9M258 165v1M258 167v1M259 161v1M259 163v1M259 225v1M259 246v1M259 257v1M259 425v4M260 157v1M260 159v1M260 429v5M261 45v10M261 153v1M261 155v1M261 223v1M261 247v1M261 259v1M262 149v1M262 151v1M263 147v1M263 222v1M263 248v1M263 261v1M264 143v1M264 145v1M265 139v1M265 141v1M265 220v1M265 249v1M265 263v1M266 135v1M266 137v1M266 424v4M267 51v4M267 131v1M267 133v1M267 219v1M267 249v1M267 264v1M267 428v5M268 46v5M268 127v1M268 129v1M269 123v1M269 125v1M269 218v1M269 250v1M269 266v1M269 423v5M270 53v3M270 119v1M270 121v1M270 428v4M271 49v4M271 115v1M271 117v1M271 216v1M271 251v1M271 268v1M272 47v2M272 111v1M272 113v1M272 423v4M273 107v1M273 109v1M273 215v1M273 252v1M273 270v1M273 427v5M274 52v5M274 103v1M274 105v1M275 47v5M275 101v1M275 213v1M275 252v1M275 272v1M275 422v3M276 97v1M276 99v1M276 425v4M277 52v5M277 93v1M277 95v1M277 212v1M277 253v1M277 274v1M277 429v2M278 48v4M278 89v1M278 91v1M279 85v1M279 87v1M279 210v1M279 254v1M279 275v1M280 81v1M280 83v1M281 79v1M281 209v1M281 255v1M281 277v1M282 421v2M283 56v3M283 208v1M283 255v1M283 279v1M283 423v4M284 52v4M284 427v3M285 50v2M285 206v1M285 256v1M285 281v1M285 420v2M286 57v2M286 422v4M287 53v4M287 205v1M287 257v1M287 283v1M287 426v3M288 51v2M288 419v3M289 59v1M289 203v1M289 258v1M289 285v1M289 422v4M290 56v3M290 426v2M291 53v3M291 202v1M291 258v1M291 286v1M291 419v2M292 52v1M292 421v4M293 58v3M293 200v1M293 259v1M293 288v1M293 425v2M294 54v4M295 53v1M295 199v1M295 260v1M295 290v1M297 198v1M297 261v1M297 292v1M297 417v1M298 418v3M299 60v3M299 196v1M299 261v1M299 294v1M299 421v3M300 56v4M300 424v1M301 55v1M301 195v1M301 262v1M301 295v1M301 415v2M302 63v1M302 417v4M303 60v3M303 193v1M303 263v1M303 297v1M303 421v3M304 57v3M304 414v1M305 56v1M305 64v2M305 192v1M305 264v1M305 299v1M305 416v2M306 61v3M307 58v3M307 190v1M307 264v1M307 301v1M307 413v2M308 57v1M308 65v2M308 415v2M309 62v3M309 189v1M309 265v1M309 303v1M309 417v3M310 59v3M310 420v2M311 58v1M311 188v1M311 266v1M311 305v1M313 186v1M313 267v1M313 306v1M313 410v2M314 67v2M314 412v3M315 64v3M315 185v1M315 267v1M315 308v1M315 415v3M316 62v2M316 409v2M316 418v1M317 61v1M317 69v2M317 183v1M317 268v1M317 310v1M317 411v2M318 66v3M318 413v3M319 63v3M319 182v1M319 269v1M319 312v1M319 408v2M319 416v2M320 62v1M320 70v2M320 410v2M321 68v2M321 181v1M321 269v1M321 314v1M321 412v3M322 66v2M322 406v2M322 415v1M323 64v2M323 71v2M323 179v1M323 270v1M323 315v1M323 408v2M324 69v2M324 410v3M325 67v2M325 178v1M325 271v1M325 317v1M325 413v2M326 65v2M327 176v1M327 272v1M327 319v1M327 403v1M328 404v2M329 75v2M329 175v1M329 272v1M329 321v1M329 406v2M330 73v2M330 402v1M330 408v2M331 71v2M331 77v1M331 173v1M331 273v1M331 323v1M331 403v2M331 410v2M332 69v2M332 75v2M332 405v2M333 68v1M333 73v2M333 172v1M333 274v1M333 325v1M333 400v1M333 407v2M334 72v1M334 401v2M334 409v1M335 70v2M335 77v2M335 171v1M335 275v1M335 326v1M335 403v2M336 75v2M336 405v2M337 74v1M337 80v1M337 169v1M337 275v1M337 328v1M337 399v2M337 407v2M338 72v2M338 78v2M338 401v2M339 71v1M339 77v1M339 168v1M339 276v1M339 330v1M339 403v2M340 76v1M340 405v2M341 74v2M341 166v1M341 277v1M341 332v1M341 395v1M342 73v1M342 396v2M343 82v2M343 165v1M343 278v1M343 334v1M343 398v1M344 80v2M344 393v1M344 399v1M345 79v1M345 86v1M345 163v1M345 192v1M345 278v1M345 336v1M345 394v2M345 400v2M346 77v2M346 84v2M346 396v1M346 402v1M347 82v2M347 162v1M347 191v1M347 279v1M347 337v1M347 391v1M347 397v1M348 81v1M348 88v1M348 392v2M348 398v2M349 79v2M349 86v2M349 161v1M349 280v1M349 339v1M349 389v1M349 394v1M350 84v2M350 90v1M350 390v2M350 395v1M351 83v1M351 88v2M351 159v1M351 190v1M351 281v1M351 341v1M351 392v1M351 396v2M352 81v2M352 87v1M352 393v1M353 86v1M353 158v1M353 189v1M353 281v1M353 343v1M353 394v2M354 84v2M354 385v1M354 396v1M355 83v1M355 156v1M355 188v1M355 282v1M355 345v1M355 386v1M356 82v1M356 94v1M356 387v1M357 92v2M357 155v1M357 283v1M357 346v1M357 383v1M357 388v2M358 91v1M358 96v1M358 384v1M358 390v1M359 90v1M359 95v1M359 153v1M359 284v1M359 348v1M359 385v1M359 391v1M360 88v2M360 94v1M360 381v1M360 386v2M361 87v1M361 92v2M361 98v1M361 152v1M361 284v1M361 350v1M361 382v2M361 388v1M362 91v1M362 96v2M362 379v1M362 384v1M362 389v1M363 90v1M363 95v1M363 100v1M363 151v1M363 285v1M363 380v1M363 385v1M364 89v1M364 94v1M364 99v1M364 381v1M364 386v2M365 92v2M365 98v1M365 149v1M365 286v1M365 382v2M365 388v1M366 91v1M366 96v2M366 183v1M366 384v1M367 95v1M367 148v1M367 287v1M367 375v1M367 385v1M368 94v1M368 104v1M368 376v1M368 386v1M369 93v1M369 103v1M369 146v1M369 287v1M369 377v1M370 102v1M370 373v1M370 378v1M371 101v1M371 106v1M371 145v1M371 288v1M371 374v1M371 379v1M372 100v1M372 105v1M372 371v1M372 375v2M372 380v1M373 99v1M373 103v2M373 108v1M373 143v1M373 289v1M373 372v1M373 377v1M373 381v1M374 98v1M374 102v1M374 107v1M374 368v1M374 378v1M375 101v1M375 111v1M375 142v1M375 290v1M375 369v1M375 379v1M376 100v1M376 110v1M376 370v1M376 374v1M377 105v1M377 109v1M377 290v1M377 371v1M377 375v1M378 104v1M378 108v1M378 363v1M378 372v1M378 376v1M379 103v1M379 107v1M379 116v1M379 291v1M379 364v1M379 373v1M380 106v1M380 115v1M380 361v1M380 365v1M380 374v1M381 105v1M381 114v1M381 118v1M381 292v1M382 358v1M383 121v1M383 293v1M383 359v1M383 363v1M383 367v1M384 112v1M384 116v1M384 120v1M384 356v1M384 360v1M384 364v1M384 368v1M385 111v1M385 115v1M385 119v1M385 124v1M385 293v1M385 369v1M386 110v1M386 123v1M387 122v1M387 294v1M387 358v1M387 362v1M387 366v1M388 113v1M388 117v1M388 350v1M388 359v1M388 363v1M389 116v1M389 129v1M389 295v1M389 351v1M389 364v1M390 120v1M390 348v1M391 119v1M391 131v1M391 296v1M391 361v1M392 127v1M392 345v1M392 353v1M393 126v1M393 134v1M393 296v1M393 350v1M393 354v1M394 129v1M395 128v1M395 137v1M395 297v1M395 347v1M396 124v1M396 132v1M396 356v1M397 131v1M397 344v1M398 135v1M398 337v1M399 134v1M400 145v1M401 331v1M401 339v1M402 132v1M402 148v1M402 329v1M402 336v1M402 340v1M404 333v1M405 342v1M406 323v1M407 320v1M407 339v1M409 144v1M413 327v1M414 324v1M415 156v1M415 302v1M416 320v1M417 181v1M417 317v1M418 162v1M419 289v1M420 311v1M421 308v1M422 305v1M424 178v1M426 292v1"/>
<path stroke="#ff0000" transform="translate(0,.5)" d="M254 60h2M367 63h5M254 66h8M388 86h3M386 87h2M391 87h2M385 88h2M386 93h2M391 93h2M388 94h3M376 170h2M31 181h2M375 182h15M348 183h2M360 185h3M630 186h3M31 187h8M631 187h2M347 195h15M332 198h3M33 203h5M36 204h2M627 228h3M627 234h3M66 262h3M67 263h2M62 265h2M629 268h3M62 270h2M627 316h3M625 317h2M630 317h2M173 318h3M624 318h2M625 323h2M630 323h2M627 324h3M161 325h6M165 326h2M184 326h3M153 331h5M158 332h2M171 336h5M169 337h2M176 337h2M153 341h5M380 341h3M378 342h2M383 342h2M153 343h3M377 343h2M378 348h2M383 348h2M380 349h3M143 351h6M169 351h2M176 351h2M147 352h2M171 352h5M167 353h3M630 356h3M135 357h5M631 357h2M140 358h2M626 359h2M155 363h5M153 364h2M160 364h2M626 364h2M135 367h5M625 367h2M625 373h8M153 378h2M160 378h2M155 379h5M313 427h3M323 427h3M295 440h3M296 441h2M291 443h2M291 448h2"/>
<path stroke="#ff0000" transform="translate(.5,0)" d="M21 219v1M22 218v1M23 209v1M23 217v1M24 210v1M24 216v1M25 211v1M25 215v1M26 212v1M26 214v1M27 213v1M28 212v1M28 214v1M29 211v1M29 215v1M30 210v1M30 216v1M31 186v1M31 209v1M31 217v1M32 184v2M32 208v1M33 182v2M33 207v1M34 206v1M35 205v1M36 181v6M36 188v1M37 180v1M37 205v3M60 267v2M61 266v1M61 269v1M64 266v1M64 269v1M65 265v1M65 267v2M66 264v1M68 264v1M132 360v5M133 359v1M133 365v1M134 358v1M134 366v1M140 366v1M141 359v1M141 365v1M142 357v1M142 360v5M143 356v1M144 355v1M145 354v1M146 353v1M148 353v4M149 369v5M150 334v5M150 367v2M150 374v2M151 333v1M151 339v1M151 366v1M151 376v1M152 332v1M152 340v1M152 365v1M152 377v1M154 342v1M154 344v1M156 186v3M157 189v4M157 371v1M158 193v4M158 340v1M159 197v5M159 333v1M159 339v1M160 202v4M160 331v1M160 334v5M161 206v5M161 330v1M162 211v4M162 329v1M162 365v1M162 377v1M163 215v4M163 328v1M163 366v1M163 376v1M164 219v5M164 327v1M164 367v2M164 374v2M165 224v4M165 342v5M165 369v5M166 228v5M166 327v4M166 340v2M166 347v2M167 233v4M167 339v1M167 349v1M168 237v4M168 338v1M168 350v1M168 352v1M168 354v1M169 241v5M170 246v4M171 250v4M172 254v5M173 259v4M173 344v1M174 263v5M174 317v1M174 319v1M175 268v4M176 272v4M177 276v5M178 281v4M178 338v1M178 350v1M179 285v5M179 339v1M179 349v1M180 290v4M180 340v2M180 347v2M181 294v4M181 342v5M182 298v5M183 303v4M184 307v5M185 312v4M185 325v1M185 327v1M186 316v4M187 320v2M201 328v1M203 328v1M205 327v1M207 326v1M209 325v1M211 325v1M213 324v1M215 323v1M217 322v1M219 322v1M221 321v1M223 320v1M225 319v1M227 319v1M229 318v1M231 317v1M233 316v1M235 316v1M237 315v1M239 314v1M241 313v1M243 313v1M245 312v1M247 311v1M249 310v1M251 310v1M253 309v1M254 65v1M255 63v2M255 308v1M256 61v2M257 307v1M259 60v6M259 67v1M259 307v1M260 59v1M261 306v1M263 305v1M265 304v1M267 304v1M269 303v1M271 302v1M273 301v1M275 301v1M277 300v1M279 299v1M281 298v1M283 298v1M285 297v1M287 296v1M289 296v1M289 445v2M290 444v1M290 447v1M291 295v1M293 294v1M293 444v1M293 447v1M294 443v1M294 445v2M295 293v1M295 442v1M297 293v1M297 442v1M299 292v1M301 291v1M303 290v1M305 290v1M307 289v1M309 288v1M311 287v1M311 429v3M312 428v1M312 432v1M313 287v1M313 433v1M315 286v1M316 428v1M317 285v1M317 429v3M318 432v4M319 284v1M319 436v8M320 432v4M321 284v1M321 429v3M322 428v1M323 283v1M325 282v1M325 433v1M326 428v1M326 432v1M327 281v1M327 429v3M333 197v1M333 199v1M347 194v1M348 192v2M349 190v2M350 184v1M350 188v2M351 185v3M357 183v12M357 196v2M358 182v1M359 181v1M361 75v1M361 184v1M361 186v1M362 76v1M363 67v5M363 77v1M364 66v1M364 72v1M364 76v1M365 65v1M365 73v3M366 64v1M372 64v1M373 65v1M373 73v3M374 66v1M374 72v1M374 76v1M375 67v5M375 77v1M375 181v1M376 78v1M376 179v2M377 79v1M377 177v2M377 344v3M378 171v1M378 175v2M378 347v1M379 172v3M381 345v1M384 343v1M384 347v1M385 89v3M385 170v12M385 183v2M385 344v3M386 92v1M386 169v1M387 168v1M389 90v1M392 88v1M392 92v1M393 89v3M624 194v1M624 266v1M624 319v3M624 361v2M625 189v1M625 193v1M625 226v1M625 230v3M625 267v7M625 322v1M625 360v1M625 363v1M625 372v1M626 190v1M626 192v1M626 227v1M626 229v1M626 233v1M626 266v1M626 370v2M627 191v1M627 267v7M627 368v2M628 190v1M628 192v1M628 266v1M628 320v1M628 360v1M628 363v1M629 189v1M629 193v1M629 267v1M629 269v4M629 274v1M629 359v1M629 361v2M630 188v1M630 227v1M630 229v1M630 233v1M630 273v1M630 358v1M630 367v6M630 374v1M631 226v1M631 230v3M631 267v1M631 269v4M631 274v1M631 318v1M631 322v1M631 366v1M632 188v1M632 319v3M632 358v1"/>
<path stroke="#ffff00" transform="translate(0,.5)" d="M272 24h2M269 26h2M184 30h3M184 34h3M183 36h5M156 78h5M160 80h2M158 81h2M628 196h4M624 197h2M630 199h2M630 200h2M413 208h3M413 212h3M412 214h5M626 237h6M626 243h6M627 278h3M624 281h4M629 281h4M624 283h9M31 290h5M35 292h2M33 293h2M45 311h5M36 312h2M43 312h2M196 333h3M250 341h3M187 345h5M627 346h3M627 350h3M626 352h5M187 353h5M185 357h9M236 357h9M114 361h3M184 361h3M244 361h3M240 363h3M403 364h2M410 364h2M114 365h3M405 365h5M403 366h2M410 366h2M113 367h5M254 372h3M173 373h5M403 376h2M410 376h2M405 377h5M625 377h5M629 379h2M627 380h2M173 381h5M171 385h9M387 385h3M239 389h9M387 389h3M386 391h5M247 393h3M243 395h3"/>
<path stroke="#ffff00" transform="translate(.5,0)" d="M33 289v1M33 291v2M33 294v3M35 313v1M36 295v2M37 293v2M37 297v1M37 311v1M37 313v7M38 320v1M39 321v5M40 320v1M41 315v5M42 314v1M43 311v1M43 313v1M44 314v1M45 315v1M46 316v1M47 317v1M47 319v1M48 318v1M49 317v1M49 319v1M49 327v1M50 312v1M50 316v1M50 320v1M50 326v1M51 313v3M51 321v5M113 362v3M115 366v1M115 368v2M117 362v3M158 77v1M158 79v2M158 82v3M161 83v2M162 81v2M162 85v1M165 304v1M171 375v5M172 374v1M172 380v1M175 382v3M175 386v4M177 315v1M178 374v1M178 380v1M179 375v5M183 31v3M185 35v1M185 37v2M185 347v5M185 360v1M185 362v1M186 346v1M186 352v1M187 31v3M187 322v1M189 354v3M189 358v4M192 346v1M192 352v1M193 347v5M197 332v1M197 334v1M199 329v1M208 332v1M240 355v2M240 358v5M240 364v6M243 362v1M243 387v2M243 390v5M243 396v6M246 367v3M246 394v1M247 362v1M247 366v1M247 370v1M248 363v3M248 371v1M249 399v3M250 336v1M250 394v1M250 398v1M250 402v1M251 340v1M251 342v1M251 395v3M251 403v1M252 336v1M255 371v1M255 373v1M259 21v1M260 22v1M261 23v13M262 22v1M263 21v1M264 22v1M265 23v13M266 22v1M267 21v1M268 22v1M269 23v3M269 27v7M269 37v1M270 34v1M270 36v1M271 25v1M271 35v1M272 34v1M272 36v1M273 23v1M273 25v9M273 37v1M328 281v1M329 199v1M386 386v3M388 390v1M388 392v2M390 386v3M401 361v1M401 369v5M402 362v2M402 367v2M402 374v2M412 209v3M412 362v2M412 367v2M412 374v2M413 361v1M413 369v5M414 213v1M414 215v2M416 209v3M625 196v1M625 198v3M625 236v1M625 244v1M626 201v3M626 279v2M626 347v3M627 198v3M627 238v5M627 376v1M627 378v2M627 381v3M628 197v1M628 351v1M628 353v2M629 198v1M630 238v5M630 279v2M630 347v3M630 382v2M631 204v1M631 380v2M631 384v1M632 197v2M632 201v3M632 236v1M632 244v1"/>
<path stroke="#00ff00" transform="translate(0,.5)" d="M293 31h3M293 35h3M292 37h5M157 39h5M151 45h7M161 45h7M151 49h17M95 132h5M96 135h3M624 210h9M626 247h6M626 253h6M445 261h11M445 273h11M409 282h3M331 283h3M409 286h3M408 288h5M348 290h9M443 291h3M630 294h2M443 295h3M351 296h3M359 296h3M442 297h5M351 300h3M376 303h9M379 309h3M379 313h3M206 337h3M627 337h3M627 341h3M626 343h5M204 353h5M204 361h5M202 365h9M196 366h3M192 382h5M87 387h5M626 389h5M88 390h3M192 390h5M627 392h3M190 394h9M104 400h2M110 400h2M107 404h2M113 404h2M104 410h2M110 410h2M220 412h3M107 414h2M113 414h2M220 416h3M219 418h5"/>
<path stroke="#00ff00" transform="translate(.5,0)" d="M86 384v1M86 389v1M87 385v2M87 388v1M88 391v1M89 386v1M89 388v2M89 392v1M90 391v1M91 385v2M91 388v1M92 384v1M92 389v1M94 129v1M94 134v1M95 130v2M95 133v1M96 136v1M97 131v1M97 133v2M97 137v1M98 136v1M99 130v2M99 133v1M100 129v1M100 134v1M101 405v1M101 415v1M102 403v2M102 413v2M103 402v1M103 412v1M104 401v1M104 411v1M105 399v1M105 409v1M106 401v3M106 411v3M107 405v1M107 415v1M108 403v1M108 413v1M109 402v1M109 412v1M110 401v1M110 411v1M111 399v1M111 409v1M112 401v3M112 411v3M113 405v1M113 415v1M114 403v1M114 413v1M115 402v1M115 412v1M116 400v2M116 410v2M117 399v1M117 409v1M155 41v3M156 40v1M156 44v1M162 40v1M162 44v1M163 41v3M190 380v1M190 384v5M191 381v1M191 383v1M191 389v1M194 391v3M194 395v2M197 365v1M197 367v1M197 381v1M197 383v1M197 389v1M198 380v1M198 384v5M202 351v1M202 355v5M203 352v1M203 354v1M203 360v1M206 362v3M206 366v2M207 336v1M207 338v1M209 352v1M209 354v1M209 360v1M210 351v1M210 355v5M219 411v1M219 413v3M221 417v1M221 419v1M223 411v1M223 413v3M292 30v1M292 32v3M294 36v1M294 38v1M296 30v1M296 32v3M332 282v1M332 284v1M346 284v1M346 294v1M347 285v1M347 293v1M348 286v4M348 291v2M350 297v3M352 288v2M352 291v5M354 297v3M356 286v4M356 291v2M357 285v1M357 293v1M358 284v1M358 294v1M360 295v1M360 297v1M374 297v1M374 307v1M375 298v1M375 306v1M376 299v4M376 304v2M378 310v3M380 301v2M380 304v5M382 310v3M384 299v4M384 304v2M385 298v1M385 306v1M386 297v1M386 307v1M408 281v1M408 283v3M410 287v1M410 289v1M412 281v1M412 283v3M442 290v1M442 292v3M443 259v1M443 275v1M444 260v1M444 274v1M444 296v1M444 298v1M446 290v1M446 292v3M447 262v11M453 262v11M456 260v1M456 274v1M457 259v1M457 275v1M624 206v1M624 214v1M624 286v1M625 207v1M625 213v1M625 246v1M625 254v1M625 287v7M625 386v1M625 391v1M626 208v2M626 211v2M626 286v1M626 336v1M626 338v3M626 387v2M626 390v1M627 248v5M627 287v7M627 393v1M628 286v1M628 342v1M628 344v1M628 388v1M628 390v2M628 394v1M629 287v7M629 393v1M630 208v2M630 211v2M630 248v5M630 336v1M630 338v3M630 387v2M630 390v1M631 207v1M631 213v1M631 386v1M631 391v1M632 206v1M632 214v1M632 246v1M632 254v1M632 291v3"/>
<path stroke="#0000ff" transform="translate(0,.5)" d="M89 89h3M88 91h5M77 113h3M362 113h3M361 115h5M75 117h2M104 148h5M109 149h2M433 152h5M430 153h3M439 154h3M429 158h3M439 160h3M109 163h2M104 164h5M130 164h5M429 164h3M135 165h2M438 165h3M433 166h5M125 167h3M135 179h2M130 180h5M442 181h3M445 182h2M151 184h3M445 188h2M442 189h3M64 190h2M67 190h3M71 190h2M67 193h3M66 195h5M625 216h2M630 216h2M627 257h3M625 258h2M630 258h2M625 260h2M630 261h2M625 263h2M630 263h2M627 264h3M630 296h3M631 297h2M161 307h3M144 313h3M144 317h3M141 320h2M148 320h2M143 321h5M141 325h9M626 326h3M137 327h3M629 327h2M629 333h2M121 334h3M626 334h3M121 338h3M118 341h2M125 341h2M253 341h2M120 342h5M118 346h9M253 356h3M258 356h5M265 356h3M256 361h2M263 361h2M258 362h5M256 366h9M257 372h2M258 386h3M263 386h5M270 386h3M261 391h2M268 391h2M263 392h5M317 393h3M320 394h2M261 396h9M624 397h2M627 397h3M631 397h2M320 400h2M627 400h3M317 401h3M626 402h5M627 410h3M626 412h5M180 441h2M183 441h3M187 441h2M183 444h3M182 446h5M203 449h17"/>
<path stroke="#0000ff" transform="translate(.5,0)" d="M63 101v1M64 102v1M65 103v13M65 189v1M65 191v1M66 102v1M66 192v1M67 101v1M68 102v1M68 189v1M68 191v2M68 194v1M68 196v2M69 103v13M70 102v1M70 192v1M71 101v1M71 189v1M71 191v1M72 102v1M73 103v13M74 116v1M77 116v1M78 112v1M78 114v2M87 85v3M88 88v1M89 86v1M90 85v1M90 87v1M90 90v1M90 92v2M91 86v1M92 88v1M93 85v3M102 150v1M102 162v1M103 149v1M103 151v1M103 161v1M103 163v1M104 152v1M104 160v1M105 153v2M105 158v2M106 155v3M111 150v1M111 162v1M112 151v1M112 161v1M113 152v2M113 159v2M114 154v5M116 334v5M117 339v2M120 335v3M122 343v3M122 347v4M124 335v3M126 166v1M126 168v1M127 339v2M128 166v1M128 178v1M128 334v5M129 165v1M129 167v1M129 177v1M129 179v1M130 168v1M130 176v1M131 169v2M131 174v2M132 171v3M137 166v1M137 178v1M138 167v1M138 177v1M138 326v1M138 328v1M139 168v2M139 175v2M139 313v5M140 170v5M140 318v2M143 314v3M145 322v3M145 326v4M147 314v3M150 318v2M151 313v5M152 183v1M152 185v1M162 306v1M162 308v1M181 440v1M181 442v1M182 443v1M184 440v1M184 442v2M184 445v1M184 447v2M186 443v1M187 440v1M187 442v1M203 441v1M203 457v1M204 442v1M204 456v1M205 443v1M205 455v1M206 444v2M206 453v2M207 446v3M207 450v3M215 446v3M215 450v3M216 444v2M216 453v2M217 443v1M217 455v1M218 442v1M218 456v1M219 441v1M219 457v1M253 340v1M253 342v1M254 354v2M254 357v2M255 359v2M257 371v1M257 373v1M259 384v2M259 387v2M260 354v2M260 357v5M260 363v3M260 367v4M260 389v2M265 359v2M265 384v2M265 387v5M265 393v3M265 397v4M266 354v2M266 357v2M270 389v2M271 384v2M271 387v2M316 394v1M316 400v1M317 395v1M317 399v1M318 396v3M321 395v1M321 399v1M322 396v3M360 109v3M361 112v1M362 110v1M363 109v1M363 111v1M363 114v1M363 116v2M364 110v1M365 112v1M366 109v3M427 156v1M427 160v3M428 155v1M428 159v1M428 163v1M429 154v1M432 159v1M432 163v1M432 165v1M433 160v3M437 156v3M438 153v1M438 155v1M438 159v1M441 164v1M441 182v1M441 188v1M442 155v1M442 159v1M442 163v1M442 183v1M442 187v1M443 156v3M443 162v1M443 184v3M446 183v1M446 187v1M447 184v3M624 217v2M624 259v1M624 261v2M624 304v1M625 219v1M625 299v1M625 303v1M625 327v1M625 333v1M625 396v1M625 398v1M625 406v3M626 300v1M626 302v1M626 328v1M626 332v1M626 399v1M626 409v1M627 217v3M627 261v2M627 301v1M627 329v3M627 407v1M628 220v5M628 300v1M628 302v1M628 396v1M628 398v2M628 401v1M628 403v2M628 406v1M628 408v1M628 411v1M628 413v2M629 217v3M629 259v2M629 299v1M629 303v1M629 407v1M630 298v1M630 328v1M630 332v1M630 399v1M630 409v1M631 219v1M631 329v3M631 396v1M631 398v1M631 406v3M632 217v2M632 259v2M632 262v1M632 298v1"/>
<path stroke="#00ffff" transform="translate(.5,0)" d="M253 335v1M255 334v1M257 332v1M259 331v1M261 329v1M263 328v1M265 327v1M267 325v1M269 324v1M271 322v1M273 321v1M275 319v1M277 318v1M279 316v1M281 315v1M283 314v1M285 312v1M287 311v1M289 309v1M291 308v1M293 306v1M295 305v1M297 303v1M299 302v1M301 301v1M303 299v1M305 298v1M307 296v1M309 295v1M311 293v1M313 292v1M315 290v1M317 289v1M319 288v1M321 286v1M323 285v1M325 283v1M327 282v1"/>
</g>
<g class="h">
<text transform="translate(70.5,297.5) scale(.8,1)" fill="#ff0000" stroke="#ff0000">1</text>
<text transform="translate(139.5,389.5) scale(.8,1)" fill="#ffff00" stroke="#ffff00">2</text>
<text transform="translate(247.5,420.5) scale(.8,1)" fill="#00ff00" stroke="#00ff00">3</text>
<text transform="translate(338.5,390.5) scale(.8,1)" fill="#0000ff" stroke="#0000ff">4</text>
<text transform="translate(390.5,335.5) scale(.8,1)" fill="#ff0000" stroke="#ff0000">5</text>
<text transform="translate(414.5,274.5) scale(.8,1)" fill="#ffff00" stroke="#ffff00">6</text>
<text transform="translate(408.5,189.5) scale(.8,1)" fill="#00ff00" stroke="#00ff00">7</text>
<text transform="translate(339.5,97.5) scale(.8,1)" fill="#0000ff" stroke="#0000ff">8</text>
<text transform="translate(231.5,66.5) scale(.8,1)" fill="#ff0000" stroke="#ff0000">9</text>
<text transform="translate(141.3,96.5) scale(.8,1)" letter-spacing="2" fill="#ffff00" stroke="#ffff00">10</text>
<text transform="translate(89.3,151.5) scale(.8,1)" letter-spacing="2" fill="#00ff00" stroke="#00ff00">11</text>
<text transform="translate(65.3,212.5) scale(.8,1)" letter-spacing="2" fill="#0000ff" stroke="#0000ff">12</text>
</g>
<g class="t">
<text y="14"><tspan x="485.5" fill="#ffffff" stroke="#ffffff">Astrolog 5.41G</tspan></text>
<text y="24"><tspan x="485.5" fill="#bfbfbf" stroke="#bfbfbf">Inner ring:</tspan></text>
<text y="34"><tspan x="485.5" fill="#bfbfbf" stroke="#bfbfbf">Chart of the Moment</tspan></text>
<text y="44"><tspan x="485.5" fill="#ffffff" stroke="#ffffff">Mon February 9, 2026</tspan></text>
<text y="54"><tspan x="491.5" fill="#ffffff" stroke="#ffffff">3:40:00am (ST -8:00 GMT)</tspan></text>
<text y="64"><tspan x="485.5" fill="#bfbfbf" stroke="#bfbfbf">San Francisco, CA</tspan></text>
<text y="74"><tspan x="485.5" fill="#bfbfbf" stroke="#bfbfbf">122°41'00&quot;W 37°79'00&quot;N</tspan></text>
<text y="84"><tspan x="485.5" fill="#bfbfbf" stroke="#bfbfbf">Outer ring - Transit:</tspan></text>
<text y="94"><tspan x="485.5" fill="#ffff00" stroke="#ffff00">Mon February 9, 2026</tspan></text>
<text y="104"><tspan x="491.5" fill="#ffff00" stroke="#ffff00">1:40:15pm (ST +2:00 GMT)</tspan></text>
<text y="114"><tspan x="491.5" fill="#bfbfbf" stroke="#bfbfbf">26°43'00&quot;E 58°23'00&quot;N</tspan></text>
<text y="124"><tspan x="485.5" fill="#bfbfbf" stroke="#bfbfbf">Placidus houses.</tspan></text>
<text y="134"><tspan x="485.5" fill="#bfbfbf" stroke="#bfbfbf">Tropical, Geocentric.</tspan></text>
<text y="144"><tspan x="485.5" fill="#ffff00" stroke="#ffff00">Julian Day = 2461080.9863</tspan></text>
<text y="154"><tspan x="485.5" fill="#bfbfbf" stroke="#bfbfbf">Obliquity = 23°26'09&quot;</tspan></text>
<text y="164"><tspan x="485.5" fill="#bfbfbf" stroke="#bfbfbf">Sidereal time: 22:45:26</tspan></text>
<text y="174"><tspan x="485.5" fill="#bfbfbf" stroke="#bfbfbf">DeltaT =</tspan><tspan x="545.5" fill="#bfbfbf" stroke="#bfbfbf">95.3487</tspan></text>
<text y="194"><tspan x="491.5" fill="#ff0000" stroke="#ff0000">1st house:</tspan><tspan x="557.5" fill="#ff0000" stroke="#ff0000">22Sag43</tspan></text>
<text y="204"><tspan x="491.5" fill="#ffff00" stroke="#ffff00">2nd house:</tspan><tspan x="557.5" fill="#ffff00" stroke="#ffff00">28Cap20</tspan></text>
<text y="214"><tspan x="491.5" fill="#00ff00" stroke="#00ff00">3rd house:</tspan><tspan x="563.5" fill="#0000ff" stroke="#0000ff">7Pis57</tspan></text>
<text y="224"><tspan x="491.5" fill="#0000ff" stroke="#0000ff">4th house:</tspan><tspan x="557.5" fill="#ff0000" stroke="#ff0000">12Ari56</tspan></text>
<text y="234"><tspan x="491.5" fill="#ff0000" stroke="#ff0000">5th house:</tspan><tspan x="557.5" fill="#ffff00" stroke="#ffff00">10Tau16</tspan></text>
<text y="244"><tspan x="491.5" fill="#ffff00" stroke="#ffff00">6th house:</tspan><tspan x="563.5" fill="#00ff00" stroke="#00ff00">2Gem25</tspan></text>
<text y="254"><tspan x="491.5" fill="#00ff00" stroke="#00ff00">7th house:</tspan><tspan x="557.5" fill="#00ff00" stroke="#00ff00">22Gem43</tspan></text>
<text y="264"><tspan x="491.5" fill="#0000ff" stroke="#0000ff">8th house:</tspan><tspan x="557.5" fill="#0000ff" stroke="#0000ff">28Can20</tspan></text>
<text y="274"><tspan x="491.5" fill="#ff0000" stroke="#ff0000">9th house:</tspan><tspan x="563.5" fill="#ffff00" stroke="#ffff00">7Vir57</tspan></text>
<text y="284"><tspan x="485.5" fill="#ffff00" stroke="#ffff00">10th house:</tspan><tspan x="557.5" fill="#00ff00" stroke="#00ff00">12Lib56</tspan></text>
<text y="294"><tspan x="485.5" fill="#00ff00" stroke="#00ff00">11th house:</tspan><tspan x="557.5" fill="#0000ff" stroke="#0000ff">10Sco16</tspan></text>
<text y="304"><tspan x="485.5" fill="#0000ff" stroke="#0000ff">12th house:</tspan><tspan x="563.5" fill="#ff0000" stroke="#ff0000">2Sag25</tspan></text>
<text y="324"><tspan x="491.5" fill="#ff0000" stroke="#ff0000">Sun:</tspan><tspan x="521.5" fill="#00ff00" stroke="#00ff00">20Aqu44</tspan><tspan x="575.5" fill="#bfbfbf" stroke="#bfbfbf">- 0°00'</tspan></text>
<text y="334"><tspan x="485.5" fill="#0000ff" stroke="#0000ff">Moon:</tspan><tspan x="521.5" fill="#0000ff" stroke="#0000ff">20Sco15</tspan><tspan x="575.5" fill="#bfbfbf" stroke="#bfbfbf">- 4°59'</tspan></text>
<text y="344"><tspan x="485.5" fill="#00ff00" stroke="#00ff00">Merc:</tspan><tspan x="527.5" fill="#0000ff" stroke="#0000ff">4Pis24</tspan><tspan x="575.5" fill="#bfbfbf" stroke="#bfbfbf">- 0°59'</tspan></text>
<text y="354"><tspan x="485.5" fill="#ffff00" stroke="#ffff00">Venu:</tspan><tspan x="521.5" fill="#00ff00" stroke="#00ff00">28Aqu49</tspan><tspan x="575.5" fill="#bfbfbf" stroke="#bfbfbf">- 1°27'</tspan></text>
<text y="364"><tspan x="485.5" fill="#ff0000" stroke="#ff0000">Mars:</tspan><tspan x="521.5" fill="#00ff00" stroke="#00ff00">13Aqu23</tspan><tspan x="575.5" fill="#bfbfbf" stroke="#bfbfbf">- 1°04'</tspan></text>
<text y="374"><tspan x="485.5" fill="#ff0000" stroke="#ff0000">Jupi:</tspan><tspan x="521.5" fill="#0000ff" stroke="#0000ff">16Can30</tspan><tspan x="563.5" fill="#ffffff" stroke="#ffffff">R</tspan><tspan x="575.5" fill="#bfbfbf" stroke="#bfbfbf">+ 0°19'</tspan></text>
<text y="384"><tspan x="485.5" fill="#ffff00" stroke="#ffff00">Satu:</tspan><tspan x="521.5" fill="#0000ff" stroke="#0000ff">29Pis31</tspan><tspan x="575.5" fill="#bfbfbf" stroke="#bfbfbf">- 2°09'</tspan></text>
<text y="394"><tspan x="485.5" fill="#00ff00" stroke="#00ff00">Uran:</tspan><tspan x="521.5" fill="#ffff00" stroke="#ffff00">27Tau28</tspan><tspan x="575.5" fill="#bfbfbf" stroke="#bfbfbf">- 0°11'</tspan></text>
<text y="404"><tspan x="485.5" fill="#0000ff" stroke="#0000ff">Nept:</tspan><tspan x="527.5" fill="#ff0000" stroke="#ff0000">0Ari23</tspan><tspan x="575.5" fill="#bfbfbf" stroke="#bfbfbf">- 1°19'</tspan></text>
<text y="414"><tspan x="485.5" fill="#0000ff" stroke="#0000ff">Plut:</tspan><tspan x="527.5" fill="#00ff00" stroke="#00ff00">3Aqu58</tspan><tspan x="575.5" fill="#bfbfbf" stroke="#bfbfbf">- 3°49'</tspan></text>
<text y="434"><tspan x="485.5" fill="#bfbfbf" stroke="#bfbfbf">Fire: 1, Earth: 1,</tspan></text>
<text y="444"><tspan x="485.5" fill="#bfbfbf" stroke="#bfbfbf">Air : 4, Water: 4</tspan></text>
<text y="454"><tspan x="485.5" fill="#bfbfbf" stroke="#bfbfbf">Car: 2, Fix: 6, Mut: 2</tspan></text>
<text y="464"><tspan x="485.5" fill="#bfbfbf" stroke="#bfbfbf">Yang: 5, Yin: 5</tspan></text>
<text y="474"><tspan x="485.5" fill="#bfbfbf" stroke="#bfbfbf">M: 2, N: 8, A: 8, D: 2</tspan></text>
</g>
</svg>
</body></html>
